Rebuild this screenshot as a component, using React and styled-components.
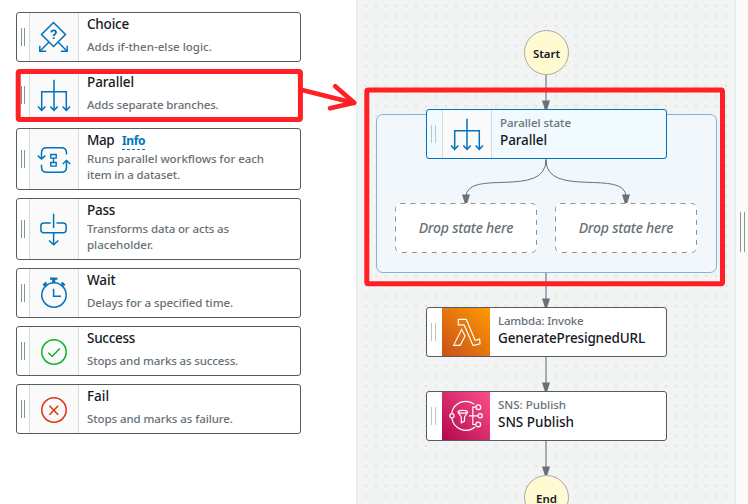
import React from "react";
import styled, { createGlobalStyle } from "styled-components";

const GlobalStyle = createGlobalStyle`
  *, *::before, *::after { box-sizing: border-box; }
  body { margin: 0; background: #fff; overflow: hidden; font-family: "Noto Sans", "Open Sans", sans-serif; }
`;

const Page = styled.div`
  display: flex;
  width: 748px;
  height: 504px;
  position: relative;
  overflow: hidden;
`;

/* ---------- state palette ---------- */

const Palette = styled.aside`
  width: 356px;
  padding: 12px 55px 0 16px;
  display: flex;
  flex-direction: column;
  gap: 8px;
  background: #fff;
`;

const Item = styled.div`
  display: flex;
  flex: none;
  height: ${(p) => (p.$tall ? 62 : 50)}px;
  border: 1px solid #545b64;
  border-radius: 3px;
  background: #fff;
  overflow: hidden;
`;

const Grip = styled.span`
  flex: none;
  align-self: center;
  width: ${(p) => p.$width || 4}px;
  height: ${(p) => p.$height || 18}px;
  margin: ${(p) => p.$margin || "0 4px"};
  border: solid ${(p) => p.$color || "#879596"};
  border-width: 0 1px;
`;

const IconCell = styled.div`
  flex: none;
  width: 50px;
  display: flex;
  align-items: center;
  justify-content: center;
  background: #fafafa;
  border: solid #d5dbdb;
  border-width: 0 1px;
`;

const ItemText = styled.div`
  display: flex;
  flex-direction: column;
  justify-content: space-between;
  padding: 1px 0 6px 8px;
`;

const Title = styled.div`
  display: flex;
  align-items: center;
  gap: 8px;
  height: 20px;
  font-size: 13.5px;
  font-weight: 500;
  line-height: 20px;
  color: #16191f;
`;

const Tracked = styled.span`
  display: block;
  width: max-content;
  white-space: nowrap;
  letter-spacing: ${(p) => p.$ls || 0}px;
`;

const Description = styled.div`
  font-size: 11.5px;
  font-weight: 500;
  line-height: 16px;
  color: #687078;
`;

const InfoLink = styled.a`
  height: 16px;
  margin-top: 3px;
  font-size: 12px;
  font-weight: 700;
  line-height: 14px;
  letter-spacing: -0.4px;
  color: #0073bb;
  border-bottom: 1px dashed #0073bb;
`;

/* ---------- canvas ---------- */

const Canvas = styled.main`
  position: relative;
  flex: none;
  width: 380px;
  border: solid #e6e9e9;
  border-width: 0 1px;
  background-color: #f2f3f3;
  background-image: linear-gradient(#e6e8e8, #e6e8e8);
  background-repeat: no-repeat;
  background: radial-gradient(circle at 1px 1px, #e1e4e4 0 1.1px, transparent 1.2px) 8px 5px / 10px 10px #f2f3f3;
`;

const Splitter = styled.div`
  flex: 1;
  display: flex;
  background: #fafafa;
`;

const Overlay = styled.svg`
  position: absolute;
  left: 0;
  top: 0;
  pointer-events: none;
`;

/* Canvas coordinates start one pixel inside the left border. */
const Placed = styled.div`
  position: absolute;
  left: ${(p) => p.$x - 357}px;
  top: ${(p) => p.$y}px;
`;

const Terminal = styled(Placed)`
  display: flex;
  justify-content: center;
  width: 45px;
  height: 45px;
  padding-top: 1px;
  border: 1px solid #aaaaa5;
  border-radius: 50%;
  background: #fffad1;
  font-size: 11.5px;
  font-weight: 600;
  line-height: 43px;
  color: #16191f;
`;

const Group = styled(Placed)`
  width: 341px;
  height: 159px;
  border: 1px solid #7db5da;
  border-radius: 7px;
  background: rgba(240, 248, 253, 0.75);
`;

const Node = styled(Placed)`
  display: flex;
  width: 241px;
  height: 50px;
  border: 1px solid ${(p) => (p.$selected ? "#0073bb" : "#545b64")};
  border-radius: 3px;
  background: ${(p) => (p.$selected ? "#f1faff" : "#fff")};
  overflow: hidden;
`;

const NodeText = styled.div`
  padding: 5px 0 0 8px;
`;

const Kind = styled.div`
  font-size: 11.5px;
  font-weight: 500;
  line-height: 16px;
  color: #687078;
`;

const Name = styled.div`
  font-size: 13.5px;
  font-weight: 500;
  line-height: 18px;
  color: #16191f;
`;

const ServiceIcon = styled.div`
  flex: none;
  width: 48px;
  height: 48px;
  background: linear-gradient(45deg, ${(p) => p.$from}, ${(p) => p.$to});
`;

const DropZone = styled(Placed)`
  display: flex;
  align-items: center;
  justify-content: center;
  width: 142px;
  height: 50px;
  border-radius: 5px;
  background: #fff;
  font-size: 14px;
  font-style: italic;
  font-weight: 500;
  line-height: 20px;
  color: #687078;
`;

const DropOutline = styled.svg`
  position: absolute;
  inset: 0;
`;

/* ---------- icons ---------- */

const Glyph = ({ children, color = "#0073bb", width = 1.5 }) => (
  <svg width="48" height="48" viewBox="0 0 48 48" fill="none" stroke={color} strokeWidth={width} style={{ flex: "none" }}>
    {children}
  </svg>
);

const ChoiceIcon = () => (
  <Glyph>
    <path d="M23.5 9.5 35.5 21.5 23.5 33.5 11.5 21.5zM18.8 29.3 9.8 38.3M28.2 29.3l9 9" />
    <path d="M9.8 32.7v5.6h6.4M37.2 32.7v5.6h-6.4" />
    <path d="M21.3 19.4c.2-2.7 4.7-2.5 4.7 0 0 1.8-2.4 1.8-2.4 3.6M23.6 24.3v1.8" strokeWidth="1.8" />
  </Glyph>
);

const ParallelIcon = () => (
  <Glyph>
    <path d="M24 8.7V39M11.7 39V20.7h24.6V39" />
    <path d="m8 35.5 3.7 3.8 3.7-3.8M20.3 35.5l3.7 3.8 3.7-3.8M32.6 35.5l3.7 3.8 3.7-3.8" />
  </Glyph>
);

const MapIcon = () => (
  <Glyph>
    <path d="M11.5 23.5V18q0-5.2 5.2-5.2h14.6q5.2 0 5.2 5.2v1.6M36.5 26v6q0 5.3-5.2 5.3H16.7q-5.2 0-5.2-5.3v-2.2" />
    <path d="m7.8 20.6 3.7 3.4 3.8-3.4M32.8 29l3.7-3.5 3.8 3.5" />
    <path d="M20.8 19.5h5.4v3.6h-5.4zM20.8 27.5h5.4v3.6h-5.4zM23.5 23.1v4.4" strokeWidth="1.4" />
  </Glyph>
);

const PassIcon = () => (
  <Glyph>
    <path d="M23.6 8.7V23M23.6 27.7v11.8M19 35.5l4.7 4.2 4.6-4.2" />
    <path d="M20.8 18h-7q-2.9 0-2.9 2.8V25q0 2.7 2.9 2.7h19.4q2.9 0 2.9-2.7v-4.2q0-2.8-2.9-2.8h-6.7" />
  </Glyph>
);

const WaitIcon = () => (
  <Glyph>
    <circle cx="24" cy="26" r="12.2" />
    <path d="M23.6 19.7v7.6H31" />
    <path d="M20 9.6h7.4M13.3 16.5l3-3.1M34.7 16.5l-3-3.1" strokeWidth="2.2" />
    <path d="M23.7 10v4" strokeWidth="3" />
    <path d="m14.7 14.7 2.2 2.4M33.3 14.7l-2.2 2.4" />
  </Glyph>
);

const SuccessIcon = () => (
  <Glyph color="#0cb32d">
    <circle cx="24" cy="25" r="12.2" />
    <path d="m18.3 25.7 3.8 3.8 7.6-8" />
  </Glyph>
);

const FailIcon = () => (
  <Glyph color="#df3312">
    <circle cx="24" cy="25" r="12.2" />
    <path d="m19.4 20.7 8.8 9M28.2 20.7l-8.8 9" />
  </Glyph>
);

const LambdaIcon = () => (
  <Glyph color="#fff" width={1.15}>
    <path d="M16.3 11.3h8l8.5 20.4q.3.7 1 .5l3.8-1.1.5 4.8-6.3 1.5q-.7.2-1-.5l-8.3-19.2q-.3-.8-1-.8h-5.2z" />
    <path d="m19.6 21.4 3.5 6.7-5 9.2h-6.4z" />
  </Glyph>
);

const SnsIcon = () => (
  <Glyph color="#fff" width={1.2}>
    <path d="M32.5 12.4A14.3 14.3 0 0 0 9.6 21.5M9.8 26.2A14.3 14.3 0 0 0 33 35" />
    <circle cx="10" cy="23.8" r="2.1" />
    <circle cx="36.4" cy="15.2" r="2.4" />
    <circle cx="38.2" cy="23.8" r="2.1" />
    <circle cx="36.2" cy="32.5" r="2.4" />
    <path d="M34 15.2h-3.2v17.3h3M27 23.8h9" />
    <ellipse cx="20.8" cy="19.7" rx="4.7" ry="1.4" />
    <path d="M16.1 20c.3 2.3 3.2 3.8 3.2 5.2v5.5l3.2-1.6v-3.9c0-1.4 2.8-3 3-5.2" />
  </Glyph>
);

/* ---------- data ---------- */

const states = [
  { name: "Choice", ls: -0.22, Icon: ChoiceIcon, lines: [["Adds if-then-else logic.", 0.02]] },
  { name: "Parallel", ls: -0.1, Icon: ParallelIcon, lines: [["Adds separate branches.", -0.16]] },
  {
    name: "Map", ls: -0.49, Icon: MapIcon, info: true,
    lines: [["Runs parallel workflows for each", -0.05], ["item in a dataset.", -0.13]],
  },
  {
    name: "Pass", ls: -0.27, Icon: PassIcon,
    lines: [["Transforms data or acts as", -0.13], ["placeholder.", -0.02]],
  },
  { name: "Wait", ls: -0.12, Icon: WaitIcon, lines: [["Delays for a specified time.", -0.07]] },
  { name: "Success", ls: -0.29, Icon: SuccessIcon, lines: [["Stops and marks as success.", -0.14]] },
  { name: "Fail", ls: -0.03, Icon: FailIcon, lines: [["Stops and marks as failure.", -0.09]] },
];

const PaletteItem = ({ name, ls, Icon, info, lines }) => (
  <Item $tall={lines.length > 1}>
    <Grip />
    <IconCell><Icon /></IconCell>
    <ItemText>
      <Title>
        <Tracked $ls={ls}>{name}</Tracked>
        {info && <InfoLink>Info</InfoLink>}
      </Title>
      <Description>
        {lines.map(([text, spacing]) => <Tracked key={text} $ls={spacing}>{text}</Tracked>)}
      </Description>
    </ItemText>
  </Item>
);

const StateNode = ({ x, y, selected, kind, kindLs, name, nameLs, children }) => (
  <Node $x={x} $y={y} $selected={selected}>
    <Grip $color="#bcc4c6" $width={5} $margin={selected ? "0 6px 0 4px" : "0 6px 0 4px"} />
    {children}
    <NodeText>
      <Kind><Tracked $ls={kindLs}>{kind}</Tracked></Kind>
      <Name><Tracked $ls={nameLs}>{name}</Tracked></Name>
    </NodeText>
  </Node>
);

const DropTarget = ({ x, y }) => (
  <DropZone $x={x} $y={y}>
    <DropOutline width="142" height="50" fill="none" stroke="#879596">
      <rect x="0.5" y="0.5" width="141" height="49" rx="5" strokeDasharray="5 5" />
    </DropOutline>
    <Tracked $ls={-0.2}>Drop state here</Tracked>
  </DropZone>
);

const arrowTips = [[546, 109], [466, 203], [626, 203], [546, 307], [546, 391], [546, 475]];

const Connectors = () => (
  <Overlay width="378" height="504" viewBox="357 0 378 504">
    <path d="M546 75v30M546 159v5M546 273v30M546 357v30M546 441v30" stroke="#a5abb0" strokeWidth="2" />
    <path d="M546 160C546 199 466 168 466 197M546 160C546 199 626 168 626 197" fill="none" stroke="#687078" />
    {arrowTips.map(([x, y]) => (
      <path key={`${x}-${y}`} d={`M${x - 4} ${y - 8.5}h8l-2.7 8.5h-2.6z`} fill="#687078" />
    ))}
  </Overlay>
);

const Annotations = () => (
  <Overlay width="748" height="504" fill="none" stroke="#ff1f25" strokeWidth="5" strokeLinecap="round" strokeLinejoin="round">
    <rect x="18.2" y="71.6" width="282.2" height="47.9" rx="1.5" />
    <rect x="366.8" y="90.1" width="355.7" height="193.6" rx="1.5" />
    <path d="M302 90 354 103" strokeWidth="4.6" />
    <path d="M335.2 86.3 354.2 102.8 330 108.3" strokeWidth="4.6" />
  </Overlay>
);

export default function App() {
  return (
    <Page>
      <GlobalStyle />
      <Palette>
        {states.map((s) => <PaletteItem key={s.name} {...s} />)}
      </Palette>
      <Canvas>
        <Group $x={376} $y={114} />
        <Connectors />
        <Terminal $x={524} $y={30}><Tracked $ls={-0.05}>Start</Tracked></Terminal>
        <StateNode x={426} y={109} selected kind="Parallel state" kindLs={-0.02} name="Parallel" nameLs={-0.1}>
          <IconCell><ParallelIcon /></IconCell>
        </StateNode>
        <DropTarget x={395} y={203} />
        <DropTarget x={555} y={203} />
        <StateNode x={426} y={307} kind="Lambda: Invoke" kindLs={-0.18} name="GeneratePresignedURL" nameLs={-0.16}>
          <ServiceIcon $from="#c8511b" $to="#ff9900"><LambdaIcon /></ServiceIcon>
        </StateNode>
        <StateNode x={426} y={391} kind="SNS: Publish" kindLs={0} name="SNS Publish" nameLs={-0.02}>
          <ServiceIcon $from="#b0084d" $to="#ff4f8b"><SnsIcon /></ServiceIcon>
        </StateNode>
        <Terminal $x={524} $y={475}><Tracked $ls={0.02}>End</Tracked></Terminal>
      </Canvas>
      <Splitter>
        <Grip $width={5} $height={40} $margin="-40px 0 0 4px" />
      </Splitter>
      <Annotations />
    </Page>
  );
}
